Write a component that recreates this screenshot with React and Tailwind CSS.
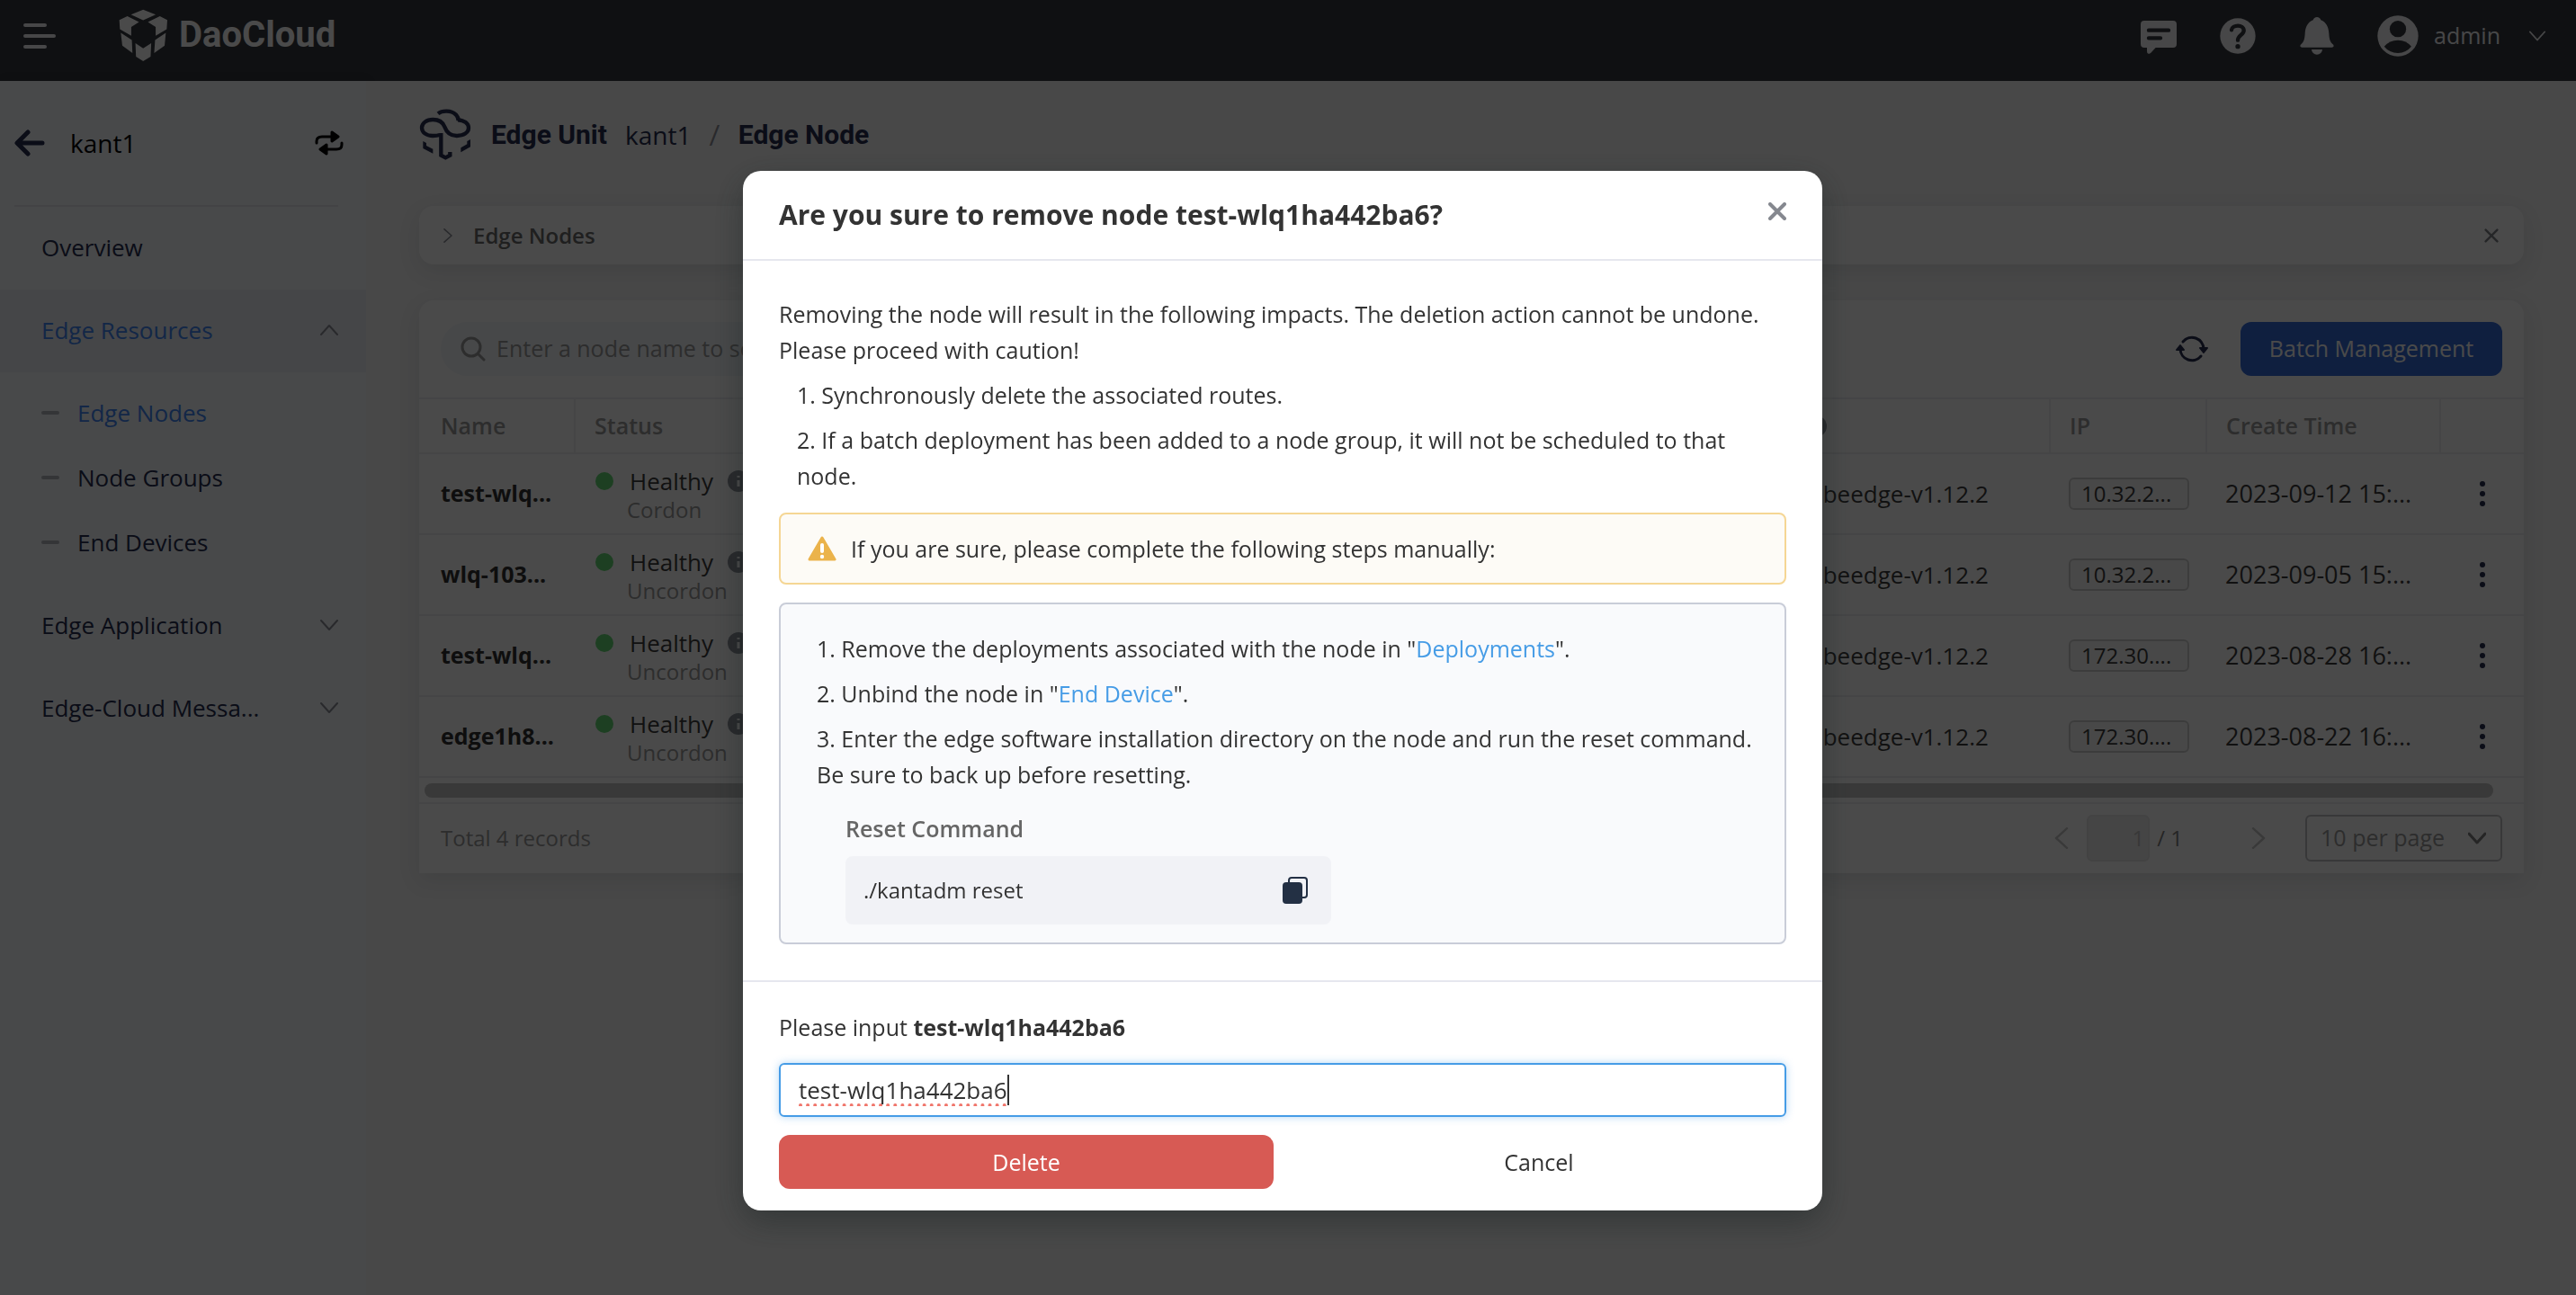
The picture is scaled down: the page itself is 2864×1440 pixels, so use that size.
import { useState } from "react";

const NODES = [
  { name: "test-wlq...", state: "Cordon", ip: "10.32.2...", time: "2023-09-12 15:..." },
  { name: "wlq-103...", state: "Uncordon", ip: "10.32.2...", time: "2023-09-05 15:..." },
  { name: "test-wlq...", state: "Uncordon", ip: "172.30....", time: "2023-08-28 16:..." },
  { name: "edge1h8...", state: "Uncordon", ip: "172.30....", time: "2023-08-22 16:..." },
];

function Chevron({ d, className, width = 2 }) {
  return (
    <svg viewBox="0 0 20 20" className={className} fill="none" stroke="currentColor" strokeWidth={width} strokeLinecap="round" strokeLinejoin="round" aria-hidden="true">
      <path d={d} />
    </svg>
  );
}
const DOWN = "M1 5L10 15L19 5";
const UP = "M1 15L10 5L19 15";
const LEFT = "M15 1L5 10L15 19";
const RIGHT = "M5 1L15 10L5 19";
const CROSS = "M2 2L18 18M18 2L2 18";

function Logo() {
  return (
    <svg viewBox="36 30 166 178" className="h-[59px] w-[55px]" fill="currentColor" aria-hidden="true">
      <path d="M118 32L160 49L118 68L77 49Z" />
      <path d="M38 67L65 54L104 74L78 90V120L40 98Z" />
      <path d="M199 67L174 54L134 74L160 90V120L197 98Z" />
      <path d="M43 110L80 134L82 178L48 153Z" />
      <path d="M194 110L158 134L155 178L190 153Z" />
      <path d="M92 145L118 162L145 145L143 190L118 205L94 190Z" />
    </svg>
  );
}

function EdgeIcon() {
  return (
    <svg viewBox="22 33 172 174" className="h-[58px] w-[58px]" fill="none" stroke="currentColor" strokeWidth="13" aria-hidden="true">
      <path d="M84 49C98 38 128 38 143 52C150 59 152 65 152 73" />
      <path d="M90 120C84 122 76 123 67 123C44 123 30 111 30 96C30 81 45 69 67 69C88 69 101 80 106 93C112 110 125 123 146 123C170 123 186 112 186 97C186 82 172 71 150 70" />
      <path d="M94 114V188L109 196L124 188V177" />
      <path d="M34 141L45 147V156L67 167V182L34 165Z" fill="currentColor" stroke="none" />
      <path d="M192 135V160L160 178V163L181 151V141Z" fill="currentColor" stroke="none" />
    </svg>
  );
}

function TopBar() {
  return (
    <header className="flex h-[90px] shrink-0 items-start bg-[#34373e] px-[26px] text-[#f3f4f6]">
      <button aria-label="Toggle menu" className="mt-[26px] flex w-9 flex-col gap-2">
        <span className="h-1 w-[26px] rounded-full bg-current" />
        <span className="h-1 w-9 rounded-full bg-current" />
        <span className="h-1 w-[26px] rounded-full bg-current" />
      </button>
      <div className="ml-[70px] flex h-[78px] items-center gap-3 text-white">
        <Logo />
        <span className="font-['Roboto',sans-serif] text-[40px] font-bold leading-none">DaoCloud</span>
      </div>
      <div className="ml-auto flex h-20 items-center">
        <button aria-label="Messages">
          <svg viewBox="60 60 120 126" className="h-[42px] w-10" aria-hidden="true">
            <path fill="currentColor" d="M72 72H168Q180 72 180 84V150Q180 162 168 162H110L94 179Q81 188 81 174V162H72Q60 162 60 150V84Q60 72 72 72Z" />
            <path d="M87 104H153M87 130H126" stroke="#34373e" strokeWidth="13" strokeLinecap="round" />
          </svg>
        </button>
        <button aria-label="Help" className="ml-12">
          <svg viewBox="324 60 120 120" className="size-10" fill="none" aria-hidden="true">
            <circle cx="384" cy="120" r="59" fill="currentColor" />
            <path d="M363 100C365 82 404 80 404 102C404 116 384 118 384 134" stroke="#34373e" strokeWidth="13" strokeLinecap="round" />
            <circle cx="384" cy="155" r="8" fill="#34373e" />
          </svg>
        </button>
        <button aria-label="Notifications" className="ml-12">
          <svg viewBox="588 57 120 126" className="h-[42px] w-10" fill="currentColor" aria-hidden="true">
            <path d="M648 57c6 0 12 4 13 10c18 7 26 24 27 45c1 20 4 28 13 36c5 5 3 10-3 10H598c-6 0-8-5-3-10c9-8 12-16 13-36c1-21 9-38 27-45c1-6 7-10 13-10zM630 165h36a18 17 0 0 1-36 0z" />
          </svg>
        </button>
        <button className="ml-[47px] flex items-center text-[26px]">
          <svg viewBox="850 51 136 136" className="size-[46px]" fill="#34373e" aria-hidden="true">
            <circle cx="918" cy="119" r="67" fill="#f3f4f6" />
            <circle cx="918" cy="96" r="27" />
            <path d="M873 154Q890 133 918 133Q946 133 962 154Q945 175 918 175Q890 175 873 154Z" />
          </svg>
          <span className="ml-[17px] text-[25px]">admin</span>
          <Chevron d={DOWN} className="ml-8 mr-2 size-[18px]" />
        </button>
      </div>
    </header>
  );
}

function NavItem({ label, chevron, active }) {
  return (
    <a
      href="#"
      className={
        active
          ? "flex h-[92px] items-center justify-between bg-[#eef1f8] pb-[2px] pl-[46px] pr-[31px] text-[#4186f5]"
          : "flex h-[92px] items-center justify-between pb-[2px] pl-[46px] pr-[31px]"
      }
    >
      {label}
      {chevron && <Chevron d={chevron} className="size-5 text-[#8c8f98]" width={2} />}
    </a>
  );
}

function SubItem({ label, active }) {
  return (
    <a href="#" className={active ? "flex h-[72px] items-center gap-5 pb-[2px] pl-[46px] text-[#4186f5]" : "flex h-[72px] items-center gap-5 pb-[2px] pl-[46px]"}>
      <span className="h-1 w-5 rounded-full bg-[#b4b6bc]" />
      {label}
    </a>
  );
}

function Sidebar() {
  return (
    <aside className="w-[407px] shrink-0 bg-[#f8fbff] text-[26px] text-[#262d50] shadow-[2px_0_12px_rgba(0,0,0,0.08)]">
      <div className="ml-4 mr-[31px] flex h-[140px] items-center border-b-2 border-[#e6e8ed] text-black">
        <button aria-label="Back" className="text-[#262d50]">
          <svg viewBox="0 0 34 30" className="h-[30px] w-[34px]" fill="none" stroke="currentColor" strokeWidth="5" strokeLinecap="round" strokeLinejoin="round" aria-hidden="true">
            <path d="M31 15H4M15 3L3 15L15 27" />
          </svg>
        </button>
        <span className="ml-7 text-[28px]">kant1</span>
        <button aria-label="Switch edge unit" className="ml-auto mr-[-6px]">
          <svg viewBox="0 0 32 28" className="h-7 w-8" fill="none" stroke="currentColor" strokeWidth="3" strokeLinecap="round" aria-hidden="true">
            <path d="M2 14V12Q2 7 8 7H20M30 14V16Q30 21 24 21H12" />
            <path d="M19 2L26 7L19 12ZM13 16L6 21L13 26Z" fill="currentColor" strokeLinejoin="round" />
          </svg>
        </button>
      </div>
      <nav>
        <NavItem label="Overview" />
        <NavItem label="Edge Resources" chevron={UP} active />
        <div className="py-[10px]">
          <SubItem label="Edge Nodes" active />
          <SubItem label="Node Groups" />
          <SubItem label="End Devices" />
        </div>
        <NavItem label="Edge Application" chevron={DOWN} />
        <NavItem label="Edge-Cloud Messa..." chevron={DOWN} />
      </nav>
    </aside>
  );
}

function InfoDot() {
  return (
    <svg viewBox="0 0 24 24" className="size-6 shrink-0 text-[#8c8f98]" aria-hidden="true">
      <circle cx="12" cy="12" r="12" fill="currentColor" />
      <path d="M12 6V8M12 11V18" stroke="white" strokeWidth="3" />
    </svg>
  );
}

function NodeTable() {
  return (
    <table className="w-full table-fixed border-collapse text-left text-[26px]">
      <colgroup>
        <col className="w-[173px]" />
        <col className="w-[262px]" />
        <col />
        <col className="w-[306px]" />
        <col className="w-[174px]" />
        <col className="w-[260px]" />
        <col className="w-[93px]" />
      </colgroup>
      <thead>
        <tr className="h-[61px] border-y-2 border-[#ededf0] text-[25px] text-[#9b9b9b]">
          <th className="border-r-2 border-[#ededf0] pl-6 font-semibold">Name</th>
          <th className="pl-[21px] font-semibold">Status</th>
          <th aria-hidden="true" />
          <th className="border-r-2 border-[#ededf0] pl-[34px]" aria-label="Edge version"><InfoDot /></th>
          <th className="border-r-2 border-[#ededf0] pl-[21px] font-semibold">IP</th>
          <th className="border-r-2 border-[#ededf0] pl-[21px] font-semibold">Create Time</th>
          <th aria-label="Actions" />
        </tr>
      </thead>
      <tbody className="text-[#3d3d3d]">
        {NODES.map((n) => (
          <tr key={n.time} className="h-[90px] border-b-2 border-[#ededf0]">
            <td className="pl-6 text-[25px] font-bold text-[#303030]">{n.name}</td>
            <td className="pl-[23px] pt-1">
              <div className="flex items-center leading-8">
                <span className="size-5 rounded-full bg-[#64d975]" />
                <span className="ml-[18px] mr-4">Healthy</span>
                <InfoDot />
              </div>
              <div className="pl-[35px] text-[24px] leading-8 text-[#9b9b9b]">{n.state}</div>
            </td>
            <td />
            <td className="pl-[24px]">kubeedge-v1.12.2</td>
            <td className="pl-[21px]">
              <span className="flex h-9 w-[134px] items-center rounded-md border-2 border-[#d0d0d0] bg-[#f8f8f8] px-3 text-[24px]">{n.ip}</span>
            </td>
            <td className="pl-[21px] text-[27px]">{n.time}</td>
            <td>
              <button aria-label={`Actions for ${n.name}`} className="ml-11 flex flex-col gap-[5px] py-1">
                <span className="size-[6px] rounded-full bg-[#262d50]" />
                <span className="size-[6px] rounded-full bg-[#262d50]" />
                <span className="size-[6px] rounded-full bg-[#262d50]" />
              </button>
            </td>
          </tr>
        ))}
      </tbody>
    </table>
  );
}

function Main() {
  return (
    <main className="flex min-w-0 grow flex-col bg-[#f6f6f6] pl-[59px] pr-[58px]">
      <div className="flex h-[139px] items-center pb-5 font-['Roboto',sans-serif] text-[30px] text-[#262d50]">
        <EdgeIcon />
        <span className="ml-[22px] font-bold">Edge Unit</span>
        <span className="ml-5 font-['Open_Sans',sans-serif] text-[28px]">kant1</span>
        <span className="mx-5 text-[#8c8f98]">/</span>
        <span className="font-bold">Edge Node</span>
      </div>
      <section className="flex h-[65px] items-center rounded-2xl bg-white px-6 text-[24px] shadow-[0_8px_24px_rgba(40,50,60,0.10)]">
        <Chevron d={RIGHT} className="size-4 text-[#8c8f98]" />
        <h2 className="ml-5 font-semibold text-[#6b6b6b]">Edge Nodes</h2>
        <button aria-label="Close" className="ml-auto">
          <Chevron d={CROSS} className="mr-1 size-4 text-[#7f8288]" width={3} />
        </button>
      </section>
      <section className="mt-10 rounded-t-2xl bg-white shadow-[0_8px_24px_rgba(40,50,60,0.10)]">
        <div className="flex items-center px-6 pb-6 pt-6 text-[26px]">
          <label className="flex h-[60px] w-[800px] items-center rounded-full bg-[#f3f6fa] pl-[22px] text-[#9b9b9b]">
            <svg viewBox="0 0 28 28" className="size-7" fill="none" stroke="currentColor" strokeWidth="3" strokeLinecap="round" aria-hidden="true">
              <circle cx="12" cy="12" r="10" />
              <path d="M20 20L26 26" />
            </svg>
            <input type="search" aria-label="Search nodes" placeholder="Enter a node name to search" className="ml-3 grow bg-transparent text-[25px] outline-none placeholder:text-[#9b9b9b]" />
          </label>
          <button aria-label="Refresh" className="ml-auto">
            <svg viewBox="0 0 36 32" className="h-8 w-9 text-[#262d50]" fill="none" stroke="currentColor" strokeWidth="3" strokeLinecap="round" aria-hidden="true">
              <path d="M8 8A13 13 0 0 1 31 16M28 24A13 13 0 0 1 5 16" />
              <path d="M31 20L27 15H35ZM5 12L1 17H9Z" fill="currentColor" strokeWidth="2" strokeLinejoin="round" />
            </svg>
          </button>
          <button className="ml-9 h-[60px] w-[291px] rounded-xl bg-[#346bd9] text-[25px] text-white">Batch Management</button>
        </div>
        <NodeTable />
        <div className="flex h-[29px] items-center border-b-2 border-[#ededf0] pl-[6px] pr-[34px]">
          <div className="h-4 grow rounded-full bg-[#c4c4c4]" />
        </div>
        <footer className="flex h-[77px] items-center px-6 pb-[2px] text-[24px] text-[#9b9b9b]">
          <span>Total 4 records</span>
          <button aria-label="Previous page" className="ml-auto">
            <Chevron d={LEFT} className="size-6 text-[#c4c4c4]" width={2} />
          </button>
          <input aria-label="Page" defaultValue="1" disabled className="ml-4 h-[52px] w-[70px] rounded-md border-2 border-[#e6e6e6] bg-[#ececee] pr-1 text-right text-[#c0c0c0]" />
          <span className="ml-2 text-[#7f7f7f]">/ 1</span>
          <button aria-label="Next page" className="ml-[72px]">
            <Chevron d={RIGHT} className="size-6 text-[#c4c4c4]" width={2} />
          </button>
          <span className="relative ml-10 flex items-center">
            <select aria-label="Rows per page" className="h-[52px] w-[219px] appearance-none rounded-md border-2 border-[#c0c0c4] pl-[15px] text-[25px]">
              <option>10 per page</option>
            </select>
            <Chevron d={DOWN} className="pointer-events-none absolute right-[18px] size-5 text-[#7f7f7f]" width={3} />
          </span>
        </footer>
      </section>
    </main>
  );
}

function RemoveDialog() {
  const [value, setValue] = useState("test-wlq1ha442ba6");
  return (
    <div className="fixed inset-0 flex items-start justify-center bg-black/71 pr-3 pt-[190px]">
      <div role="dialog" aria-modal="true" aria-labelledby="dialog-title" className="w-[1200px] max-w-full rounded-[20px] bg-white text-[25px] leading-10 text-[#333333] shadow-[0_12px_36px_rgba(20,30,30,0.4)]">
        <div className="flex h-[100px] items-center justify-between border-b-2 border-[#e6e7ee] px-10">
          <h1 id="dialog-title" className="text-[30px] font-bold">Are you sure to remove node test-wlq1ha442ba6?</h1>
          <button aria-label="Close dialog" className="mb-2">
            <Chevron d={CROSS} className="size-5 text-[#85888f]" width={4} />
          </button>
        </div>
        <div className="border-b-2 border-[#e6e7ee] px-10 pb-10 pt-[39px]">
          <p>
            Removing the node will result in the following impacts. The deletion action cannot be undone. Please proceed with caution!
          </p>
          <ol className="mt-[10px] flex flex-col gap-[10px] pl-5">
            <li>1. Synchronously delete the associated routes.</li>
            <li>2. If a batch deployment has been added to a node group, it will not be scheduled to that node.</li>
          </ol>
          <div className="mt-[21px] flex h-20 items-center rounded-lg border-2 border-[#f5d694] bg-[#fdfbf6] pl-[30px]">
            <svg viewBox="0 0 32 28" className="h-7 w-8" aria-hidden="true">
              <path d="M16 2L30 26H2Z" fill="#ebb34b" stroke="#ebb34b" strokeWidth="3" strokeLinejoin="round" />
              <path d="M16 10V17" stroke="white" strokeWidth="4" strokeLinecap="round" />
              <circle cx="16" cy="23" r="2.200" fill="white" />
            </svg>
            <span className="ml-4">If you are sure, please complete the following steps manually:</span>
          </div>
          <div className="mt-5 rounded-lg border-2 border-[#c9cdd8] bg-[#f9fafc] pb-5 pl-10 pr-7 pt-[29px]">
            <ol className="flex flex-col gap-[10px]">
              <li>1. Remove the deployments associated with the node in "<a href="#" className="text-[#469ce6]">Deployments</a>".</li>
              <li>2. Unbind the node in "<a href="#" className="text-[#469ce6]">End Device</a>".</li>
              <li>3. Enter the edge software installation directory on the node and run the reset command. Be sure to back up before resetting.</li>
            </ol>
            <div className="mt-5 pl-8">
              <h2 className="font-semibold text-[#666666]">Reset Command</h2>
              <div className="mt-[11px] flex h-[76px] w-[540px] items-center justify-between rounded-lg bg-[#f1f2f6] pl-5 pr-[26px] text-[24px]">
                <code className="font-['Open_Sans',sans-serif]">./kantadm reset</code>
                <button aria-label="Copy command">
                  <svg viewBox="0 0 28 30" className="h-[30px] w-7 text-[#233044]" fill="currentColor" aria-hidden="true">
                    <rect x="7" y="1" width="20" height="22" rx="3" fill="none" stroke="currentColor" strokeWidth="2" />
                    <rect x="0" y="6" width="22" height="24" rx="4" />
                  </svg>
                </button>
              </div>
            </div>
          </div>
        </div>
        <form className="px-10 pb-6 pt-[30px]" onSubmit={(e) => e.preventDefault()}>
          <label htmlFor="confirm-name">
            Please input <strong>test-wlq1ha442ba6</strong>
          </label>
          <div className="mt-5 flex h-[60px] items-center rounded-md border-2 border-[#469ce6] pl-5 shadow-[0_0_10px_rgba(70,156,230,0.4)]">
            <input
              id="confirm-name"
              value={value}
              onChange={(e) => setValue(e.target.value)}
              spellCheck={false}
              className="field-sizing-content text-[26px] leading-9 underline decoration-[#f0766c] decoration-dotted decoration-4 underline-offset-[5px] caret-transparent outline-none [text-decoration-skip-ink:none]"
            />
            <span className="h-[34px] w-[2px] bg-[#333333]" />
          </div>
          <div className="mt-5 grid grid-cols-2 gap-5">
            <button type="submit" className="h-[60px] rounded-xl bg-[#d75a54] text-white">Delete</button>
            <button type="button" className="h-[60px] rounded-xl">Cancel</button>
          </div>
        </form>
      </div>
    </div>
  );
}

export default function App() {
  return (
    <div className="flex min-h-screen flex-col font-['Open_Sans',sans-serif]">
      <TopBar />
      <div className="flex grow">
        <Sidebar />
        <Main />
      </div>
      <RemoveDialog />
    </div>
  );
}
